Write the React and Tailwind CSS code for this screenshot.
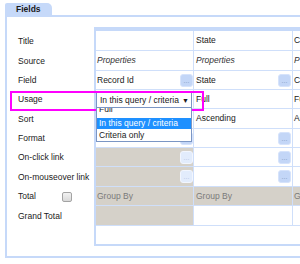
import React from 'react';

// Row heights include the 1px bottom border so rows land on the reference lines
const rows = [
  { label: 'Title', h: 'h-[20px]', c1: {}, c2: { text: 'State' }, c3: { text: 'Ci' } },
  { label: 'Source', h: 'h-[20px]', c1: { text: 'Properties', italic: true }, c2: { text: 'Properties', italic: true }, c3: { text: 'P', italic: true } },
  { label: 'Field', h: 'h-[19px]', c1: { text: 'Record Id', btn: true }, c2: { text: 'State', btn: true }, c3: { text: 'Ci' } },
  { label: 'Usage', h: 'h-[19px]', c1: { select: true }, c2: { text: 'Full' }, c3: { text: 'Fu' } },
  { label: 'Sort', h: 'h-[20px]', c1: {}, c2: { text: 'Ascending' }, c3: { text: 'As' } },
  { label: 'Format', h: 'h-[19px]', c1: { btn: true }, c2: { btn: true }, c3: {} },
  { label: 'On-click link', h: 'h-[19px]', c1: { gray: true, btn: true }, c2: { btn: true }, c3: {} },
  { label: 'On-mouseover link', h: 'h-[20px]', c1: { gray: true, btn: true }, c2: { btn: true }, c3: {} },
  { label: 'Total', h: 'h-[19px]', check: true, c1: { gray: true, text: 'Group By', muted: true }, c2: { gray: true, text: 'Group By', muted: true }, c3: { gray: true, text: 'G', muted: true } },
  { label: 'Grand Total', h: 'h-[20px]', c1: { gray: true }, c2: {}, c3: {} },
];

const DotsButton = ({ faded }) => (
  <span
    className={`flex-none w-[13px] h-[13px] rounded-[3px] border flex items-end justify-center pb-[2px] text-[7px] leading-none ${
      faded ? 'bg-[#e2ecfc] border-[#f2f6fe] text-[#b3c6e6]' : 'bg-[#c3d6f7] border-[#d6e3fb] text-[#8199c4]'
    }`}
  >
    ...
  </span>
);

const UsageSelect = () => (
  <div className="relative w-[96px] h-[16px]">
    <div className="h-full border border-[#7b96c4] bg-white flex items-center justify-between pl-[3px] pr-[2px]">
      <span>In this query / criteria</span>
      <span className="text-[7px] leading-none">▼</span>
    </div>
    <div className="absolute z-10 left-0 top-[16px] w-[96px] h-[34px] overflow-hidden bg-white border-x border-b border-[#7b96c4]">
      <div className="-mt-[5px]">
        <div className="h-[15px] leading-[12px] pl-[2px]">Full</div>
        <div className="h-[11px] leading-[11px] pl-[2px] bg-[#1e90ff] text-white">In this query / criteria</div>
        <div className="h-[12px] leading-[12px] pl-[2px]">Criteria only</div>
      </div>
    </div>
  </div>
);

const Cell = ({ cell, width, pad, faded }) => (
  <div
    className={`${width} flex-none h-full border-r border-[#cfdffa] flex items-center justify-between ${pad} ${
      cell.gray ? 'bg-[#d5d1c9]' : 'bg-white'
    } ${cell.muted ? 'text-[#7a7a7a]' : ''}`}
  >
    {cell.select ? (
      <div className="self-start pt-[2px] -ml-[1px]">
        <UsageSelect />
      </div>
    ) : (
      <span className={cell.italic ? 'italic text-[#333]' : ''}>{cell.text}</span>
    )}
    {cell.btn && <DotsButton faded={faded && cell.gray} />}
  </div>
);

export default function App() {
  return (
    <div className="relative w-[300px] h-[264px] overflow-hidden bg-white text-[8.5px] text-[#1a1a1a] font-['Liberation_Sans',Arial,sans-serif]">
      {/* Tab */}
      <div className="pt-[3px] pl-[5px] flex">
        <div className="w-[47px] h-[12px] bg-[#c6d9f9] rounded-tr-[5px] rounded-tl-[2px] font-bold pl-[11px] leading-[12px]">
          Fields
        </div>
      </div>

      {/* Panel */}
      <div className="ml-[5px] h-[243px] border-l-2 border-t-2 border-b-2 border-[#c6d9f9] flex">
        {/* Labels */}
        <div className="w-[87px] flex-none pt-[14px]">
          {rows.map((row) => (
            <div key={row.label} className={`${row.h} flex items-center pl-[11px]`}>
              <span className={row.check ? 'w-[44px]' : ''}>{row.label}</span>
              {row.check && (
                <span className="w-[10px] h-[10px] rounded-[2px] border border-[#a3a3a3] bg-gradient-to-b from-[#f2f2f2] to-[#d9d9d9]" />
              )}
            </div>
          ))}
        </div>

        {/* Grid */}
        <div className="flex-1 mt-[10px] h-[219px] border-l-2 border-b-2 border-[#c6d9f9] overflow-hidden">
          <div className="h-[4px] bg-[#c6d9f9]" />
          {rows.map((row) => (
            <div key={row.label} className={`${row.h} flex border-b border-[#cfdffa] w-[320px]`}>
              <Cell cell={row.c1} width="w-[98px]" pad="pl-[1px]" faded />
              <Cell cell={row.c2} width="w-[99px]" pad="pl-[2px] pr-[1px]" />
              <Cell cell={row.c3} width="w-[100px]" pad="pl-[1px]" />
            </div>
          ))}
        </div>
      </div>

      {/* Highlight annotation */}
      <div className="absolute left-[10px] top-[91px] w-[194px] h-[20px] border-2 border-[#ff00ff] pointer-events-none" />
    </div>
  );
}
